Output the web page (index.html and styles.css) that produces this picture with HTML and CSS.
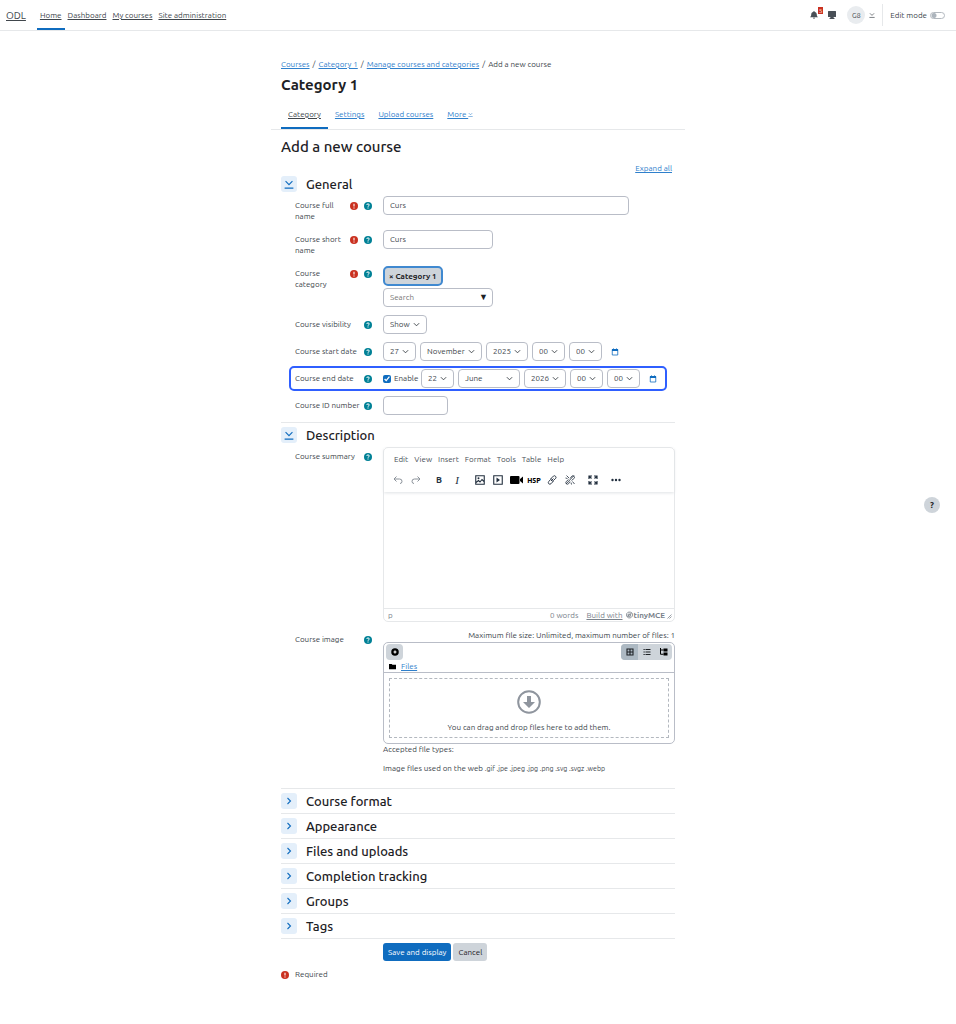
FILE: index.html
```
<!DOCTYPE html>
<html lang="en">
<head>
  <meta charset="UTF-8">
  <meta name="viewport" content="width=device-width, initial-scale=1.0">
  <title>Add a new course</title>
  <link rel="stylesheet" href="styles.css">
</head>
<body>
  <!-- icons used more than once -->
  <svg class="sprite" aria-hidden="true">
    <symbol id="i-req" viewBox="0 0 16 16"><circle cx="8" cy="8" r="8" fill="#ca3120"/><path d="M8 3.5v5.5M8 11v2" stroke="#fff" stroke-width="2.2"/></symbol>
    <symbol id="i-help" viewBox="0 0 16 16"><circle cx="8" cy="8" r="8" fill="#008196"/><path d="M5.5 6c0-3 5-3 5 0 0 1.700-2.500 1.700-2.500 3.500M8 11v2" fill="none" stroke="#fff" stroke-width="2"/></symbol>
    <symbol id="i-down" viewBox="0 0 16 16"><path d="M2.500 3.500L8 9l5.500-5.500M1 14.500h14" fill="none" stroke="currentColor" stroke-width="1.800"/></symbol>
    <symbol id="i-right" viewBox="0 0 16 16"><path d="M5 2l6 6-6 6" fill="none" stroke="currentColor" stroke-width="2.200"/></symbol>
    <symbol id="i-cal" viewBox="0 0 16 16"><path d="M2.500 3h11v11h-11z" fill="none" stroke="currentColor" stroke-width="1.600"/><path d="M2 2h12v4H2zM4 1h2v2H4zM10 1h2v2h-2z" fill="currentColor"/></symbol>
  </svg>

  <header class="navbar">
    <a class="brand" href="#">ODL</a>
    <nav class="main-nav">
      <a class="active" href="#">Home</a>
      <a href="#">Dashboard</a>
      <a href="#">My courses</a>
      <a href="#">Site administration</a>
    </nav>
    <div class="user-nav">
      <button class="icon-btn bell" aria-label="Notifications">
        <svg class="ico-8" viewBox="0 0 16 16"><path d="M8 0c.7 0 1.200.5 1.200 1.300C12 2 13.500 4 13.500 6.500c0 3 1 4.500 2.500 6H0c1.500-1.500 2.500-3 2.500-6C2.500 4 4 2 6.800 1.300 6.800.5 7.300 0 8 0zM6 13.500h4a2 2 0 0 1-4 0z" fill="#495057"/></svg>
        <span class="badge">5</span>
      </button>
      <button class="icon-btn" aria-label="Messages">
        <svg class="ico-8" viewBox="0 0 16 16"><path d="M1 0h14q1 0 1 1v10q0 1-1 1h-4v1l2 1.500V16H3v-1.500L5 13v-1H1q-1 0-1-1V1q0-1 1-1z" fill="#495057"/></svg>
      </button>
      <button class="user-btn"><span class="avatar">G8</span><svg class="ico-6"><use href="#i-down"/></svg></button>
      <label class="edit-mode">Edit mode <input type="checkbox" role="switch"></label>
    </div>
  </header>

  <main class="page">
    <nav class="breadcrumb">
      <a href="#">Courses</a><span>/</span><a href="#">Category 1</a><span>/</span><a href="#">Manage courses and categories</a><span>/</span>Add a new course
    </nav>
    <h1>Category 1</h1>
    <nav class="tabs">
      <a class="active" href="#">Category</a>
      <a href="#">Settings</a>
      <a href="#">Upload courses</a>
      <a href="#">More <svg class="ico-4"><use href="#i-down"/></svg></a>
    </nav>
    <h2>Add a new course</h2>
    <div class="expand"><a href="#">Expand all</a></div>

    <form>
      <section class="section first">
        <div class="section-head"><button type="button" class="toggle" aria-label="General"><svg><use href="#i-down"/></svg></button><h3>General</h3></div>
        <div class="rows">
          <div class="row">
            <div class="label"><label for="fullname">Course full name</label><svg class="ico-8"><use href="#i-req"/></svg><svg class="ico-8"><use href="#i-help"/></svg></div>
            <input id="fullname" class="w-full" type="text" value="Curs">
          </div>
          <div class="row">
            <div class="label"><label for="shortname">Course short name</label><svg class="ico-8"><use href="#i-req"/></svg><svg class="ico-8"><use href="#i-help"/></svg></div>
            <input id="shortname" class="w-mid" type="text" value="Curs">
          </div>
          <div class="row">
            <div class="label"><label for="category">Course category</label><svg class="ico-8"><use href="#i-req"/></svg><svg class="ico-8"><use href="#i-help"/></svg></div>
            <div class="category">
              <button type="button" class="chip">× Category 1</button>
              <div class="search"><input id="category" class="w-mid" type="text" placeholder="Search"><span>▼</span></div>
            </div>
          </div>
          <div class="row">
            <div class="label"><label for="visible">Course visibility</label><svg class="ico-8"><use href="#i-help"/></svg></div>
            <select id="visible" class="s-show"><option>Show</option></select>
          </div>
          <div class="row">
            <div class="label"><label for="startday">Course start date</label><svg class="ico-8"><use href="#i-help"/></svg></div>
            <div class="date">
              <select id="startday"><option>27</option></select>
              <select class="s-month" aria-label="Month"><option>November</option></select>
              <select class="s-year" aria-label="Year"><option>2025</option></select>
              <select aria-label="Hour"><option>00</option></select>
              <select aria-label="Minute"><option>00</option></select>
              <a class="cal" href="#" aria-label="Calendar"><svg class="ico-8"><use href="#i-cal"/></svg></a>
            </div>
          </div>
          <div class="row highlight">
            <div class="label"><label for="endday">Course end date</label><svg class="ico-8"><use href="#i-help"/></svg></div>
            <div class="date">
              <label class="enable"><input type="checkbox" checked> Enable</label>
              <select id="endday"><option>22</option></select>
              <select class="s-month" aria-label="Month"><option>June</option></select>
              <select class="s-year" aria-label="Year"><option>2026</option></select>
              <select aria-label="Hour"><option>00</option></select>
              <select aria-label="Minute"><option>00</option></select>
              <a class="cal" href="#" aria-label="Calendar"><svg class="ico-8"><use href="#i-cal"/></svg></a>
            </div>
          </div>
          <div class="row">
            <div class="label"><label for="idnumber">Course ID number</label><svg class="ico-8"><use href="#i-help"/></svg></div>
            <input id="idnumber" class="w-small" type="text">
          </div>
        </div>
      </section>

      <section class="section">
        <div class="section-head"><button type="button" class="toggle" aria-label="Description"><svg><use href="#i-down"/></svg></button><h3>Description</h3></div>
        <div class="rows">
          <div class="row">
            <div class="label"><label for="summary">Course summary</label><svg class="ico-8"><use href="#i-help"/></svg></div>
            <div class="editor">
              <div class="editor-head">
                <div class="menubar">
                  <button type="button">Edit</button><button type="button">View</button><button type="button">Insert</button><button type="button">Format</button><button type="button">Tools</button><button type="button">Table</button><button type="button">Help</button>
                </div>
                <div class="toolbar">
                  <div class="group dim">
                    <button type="button" aria-label="Undo"><svg viewBox="0 0 20 20"><path d="M7 3L2 8l5 5M2 8h11q5 0 5 4.500T14 17" fill="none" stroke="currentColor" stroke-width="2"/></svg></button>
                    <button type="button" aria-label="Redo"><svg viewBox="0 0 20 20"><path d="M13 3l5 5-5 5M18 8H7q-5 0-5 4.500T6 17" fill="none" stroke="currentColor" stroke-width="2"/></svg></button>
                  </div>
                  <div class="group">
                    <button type="button" class="bold">B</button>
                    <button type="button" class="italic">I</button>
                  </div>
                  <div class="group">
                    <button type="button" aria-label="Image"><svg viewBox="0 0 20 20"><path d="M1.500 1.500h17v17h-17zM2 15l5-4 3 3 4-5 4 4" fill="none" stroke="currentColor" stroke-width="2.200"/><circle cx="7" cy="6.500" r="2" fill="currentColor"/></svg></button>
                    <button type="button" aria-label="Multimedia"><svg viewBox="0 0 20 20"><path d="M1.500 1.500h17v17h-17z" fill="none" stroke="currentColor" stroke-width="2.200"/><path d="M7 5l7 5-7 5z" fill="currentColor"/></svg></button>
                    <button type="button" aria-label="Record video"><svg class="wide" viewBox="0 0 26 20"><path d="M2 2h15q2 0 2 2v12q0 2-2 2H2q-2 0-2-2V4q0-2 2-2zM20 8l6-5v14l-6-5z" fill="#000"/></svg></button>
                    <button type="button" class="h5p">H5P</button>
                    <button type="button" aria-label="Link"><svg viewBox="0 0 20 20"><path d="M8 12l5-5M7 8l6-6q2-1.500 4 .5t.5 4L13 11q-2 2-4 0M13 12l-5 5.500q-2.500 2-4.500 0t0-4.500L7 9q2-2 4 0" fill="none" stroke="currentColor" stroke-width="1.800"/></svg></button>
                    <button type="button" aria-label="Unlink"><svg viewBox="0 0 20 20"><path d="M10 7l4-5q2-1.500 4 .5t.5 4L13 11M10 13l-3 4.500q-2.500 2-4.500 0t0-4.500L7 9M3 1l5 5M1 6l4 1M15 13l4 5M12 15l1 4M18 1L2 18" fill="none" stroke="currentColor" stroke-width="1.600"/></svg></button>
                  </div>
                  <div class="group">
                    <button type="button" aria-label="Fullscreen"><svg viewBox="0 0 20 20"><path d="M2 8V2h6M12 2h6v6M18 12v6h-6M8 18H2v-6M2 2l5 5M18 2l-5 5M18 18l-5-5M2 18l5-5" fill="none" stroke="currentColor" stroke-width="2.400"/></svg></button>
                  </div>
                  <div class="group">
                    <button type="button" aria-label="More"><svg viewBox="0 0 20 20"><circle cx="3" cy="10" r="2.400" fill="currentColor"/><circle cx="10" cy="10" r="2.400" fill="currentColor"/><circle cx="17" cy="10" r="2.400" fill="currentColor"/></svg></button>
                  </div>
                </div>
              </div>
              <textarea id="summary"></textarea>
              <div class="statusbar">
                <span class="path">p</span><span>0 words</span>
                <a href="#"><u>Build with</u> <svg class="ico-8" viewBox="0 0 16 16"><path d="M5 1.500h5l4.500 3v6l-4 4H6L1.500 11V5zM5 6h5v5H5zM3 12L13 3" fill="none" stroke="currentColor" stroke-width="2"/></svg><b>tinyMCE</b></a>
                <svg class="grip" viewBox="0 0 10 10"><path d="M9 1L1 9M9 5L5 9" stroke="currentColor" stroke-width="1.500"/></svg>
              </div>
            </div>
          </div>

          <div class="row">
            <div class="label"><span>Course image</span><svg class="ico-8"><use href="#i-help"/></svg></div>
            <div class="files">
              <div class="limits">Maximum file size: Unlimited, maximum number of files: 1</div>
              <div class="filemanager">
                <div class="fm-bar">
                  <button type="button" class="add" aria-label="Add file"><svg class="ico-8" viewBox="0 0 16 16"><circle cx="8" cy="8" r="7.500" fill="#000"/><path d="M8 5v6M5 8h6" stroke="#fff" stroke-width="2.400"/></svg></button>
                  <div class="views">
                    <button type="button" class="on" aria-label="Icons"><svg class="ico-8" viewBox="0 0 16 16"><path d="M2 2h12v12H2zM8 2v12M2 8h12" fill="none" stroke="#1d2125" stroke-width="2.200"/></svg></button>
                    <button type="button" aria-label="List"><svg class="ico-8" viewBox="0 0 16 16"><path d="M1 3h2.500M5 3h10M1 8h2.500M5 8h10M1 13h2.500M5 13h10" stroke="#1d2125" stroke-width="2"/></svg></button>
                    <button type="button" aria-label="Tree"><svg class="ico-8" viewBox="0 0 16 16"><path d="M7 1h8v6H7zM7 9h8v6H7z" fill="#000"/><path d="M1 0v12.500h6M1 4h6" fill="none" stroke="#000" stroke-width="2"/></svg></button>
                  </div>
                </div>
                <div class="fm-path"><svg viewBox="0 0 16 16"><path d="M0 2h6l2 2h8v10H0z" fill="#000"/></svg><a href="#">Files</a></div>
                <div class="drop">
                  <svg viewBox="0 0 24 24"><circle cx="12" cy="12" r="10.800" fill="none" stroke="#8f959e" stroke-width="2"/><path d="M10 6h4v6h4l-6 6-6-6h4z" fill="#8f959e"/></svg>
                  <span>You can drag and drop files here to add them.</span>
                </div>
              </div>
              <p>Accepted file types:</p>
              <p class="types">Image files used on the web <small>.gif .jpe .jpeg .jpg .png .svg .svgz .webp</small></p>
            </div>
          </div>
        </div>
      </section>

      <section class="section closed"><button type="button" class="toggle" aria-label="Course format"><svg class="ico-8"><use href="#i-right"/></svg></button><h3>Course format</h3></section>
      <section class="section closed"><button type="button" class="toggle" aria-label="Appearance"><svg class="ico-8"><use href="#i-right"/></svg></button><h3>Appearance</h3></section>
      <section class="section closed"><button type="button" class="toggle" aria-label="Files and uploads"><svg class="ico-8"><use href="#i-right"/></svg></button><h3>Files and uploads</h3></section>
      <section class="section closed"><button type="button" class="toggle" aria-label="Completion tracking"><svg class="ico-8"><use href="#i-right"/></svg></button><h3>Completion tracking</h3></section>
      <section class="section closed"><button type="button" class="toggle" aria-label="Groups"><svg class="ico-8"><use href="#i-right"/></svg></button><h3>Groups</h3></section>
      <section class="section closed"><button type="button" class="toggle" aria-label="Tags"><svg class="ico-8"><use href="#i-right"/></svg></button><h3>Tags</h3></section>

      <div class="actions">
        <button type="submit" class="btn primary">Save and display</button>
        <button type="button" class="btn">Cancel</button>
      </div>
      <div class="required"><svg class="ico-8"><use href="#i-req"/></svg>Required</div>
    </form>
  </main>

  <button class="help-btn" aria-label="Help">?</button>
</body>
</html>
```
FILE: styles.css
```
* {
  box-sizing: border-box;
}

body {
  margin: 0;
  background: #fff;
  color: #40464c;
  font-family: Ubuntu, "Noto Sans", sans-serif;
  font-size: 8px;
  line-height: 11px;
}

button, input, select, textarea {
  font: inherit;
  color: inherit;
  margin: 0;
}

button {
  border: 0;
  padding: 0;
  background: none;
  cursor: pointer;
}

h1, h2, h3, p {
  margin: 0;
}

h1, h2, h3 { color: #1d2125; }

a { color: #2f80cc; }
svg { display: block; flex: none; }

.sprite { position: absolute; width: 0; height: 0; }
.ico-8 { width: 8px; height: 8px; }
.ico-6 { width: 6px; height: 6px; }
.ico-4 { width: 5px; height: 5px; display: inline-block; }

/* top bar */
.navbar {
  display: flex;
  height: 31px;
  padding: 0 11px 0 6px;
  border-bottom: 1px solid #e6e8ea;
}

.navbar a { color: #40464c; }

.brand {
  font-size: 10px;
  line-height: 31px;
  margin-right: 11px;
}

.main-nav { display: flex; }

.main-nav a {
  padding: 0 3px;
  line-height: 31px;
}

.main-nav .active {
  border-bottom: 2px solid #0f6cbf;
  height: 30px;
}

.user-nav {
  display: flex;
  align-items: center;
  margin-left: auto;
}

.icon-btn {
  position: relative;
  width: 18px;
  display: flex;
  justify-content: center;
}

.badge {
  position: absolute;
  top: -4px;
  right: 0;
  width: 5px;
  height: 7px;
  background: #ca3120;
  color: #fff;
  font-size: 6px;
  line-height: 7px;
}

.user-btn {
  display: flex;
  align-items: center;
  gap: 4px;
  padding: 0 7px 0 6px;
}

.avatar {
  width: 18px;
  height: 18px;
  border-radius: 50%;
  background: #e9ecef;
  font-size: 7px;
  line-height: 18px;
}

.edit-mode {
  display: flex;
  align-items: center;
  gap: 3px;
  height: 22px;
  padding-left: 7px;
  border-left: 1px solid #e6e8ea;
}

.edit-mode input {
  appearance: none;
  width: 15px;
  height: 7px;
  border: 1px solid #b3b9bf;
  border-radius: 4px;
  background: radial-gradient(circle at 3px 50%, #adb5bd 2px, transparent 3px);
}

/* page heading */
.page {
  max-width: 414px;
  margin: 0 auto;
  padding: 28px 10px 40px;
}

.breadcrumb span { margin: 0 3px; }

h1 {
  font-size: 15px;
  line-height: 20px;
  margin-top: 5px;
}

.tabs {
  display: flex;
  height: 30px;
  margin: 5px -10px 0;
  padding-left: 10px;
  border-bottom: 1px solid #e6e8ea;
}

.tabs a {
  padding: 0 7px;
  line-height: 29px;
}

.tabs .active {
  color: #40464c;
  border-bottom: 2px solid #0f6cbf;
}

h2 {
  font-size: 15px;
  font-weight: 500;
  line-height: 20px;
  margin-top: 7px;
}

.expand {
  text-align: right;
  padding: 6px 3px 0 0;
}

/* form sections */
.section {
  border-top: 1px solid #e6e8ea;
  padding: 4px 0 8px;
}

.first {
  border: 0;
  padding: 2px 0 7px;
}

.section-head, .closed {
  display: flex;
  align-items: center;
  gap: 9px;
}

.closed { padding: 4px 0; }

.toggle {
  display: flex;
  align-items: center;
  justify-content: center;
  width: 16px;
  height: 16px;
  border-radius: 3px;
  background: #e4effa;
  color: #0f6cbf;
}

.section-head .toggle svg { width: 10px; height: 10px; }

h3 {
  font-size: 13px;
  font-weight: 500;
  line-height: 16px;
}

.rows {
  display: flex;
  flex-direction: column;
  gap: 8px;
  padding: 4px 0 0 14px;
}

.row {
  position: relative;
  display: grid;
  grid-template-columns: 77px 1fr;
  column-gap: 11px;
  align-items: start;
}

.label {
  display: flex;
  gap: 2px;
  padding-top: 4px;
}

.label > :first-child { margin-right: auto; }
.label svg { margin-top: 2px; }
.label svg + svg { margin-left: 4px; }

.highlight::before {
  content: "";
  position: absolute;
  inset: -3px 8px -3px -6px;
  border: 2px solid #2f5fff;
  border-radius: 5px;
}

.row input[type="text"], select {
  height: 19px;
  padding: 0 6px;
  border: 1px solid #b9bdc7;
  border-radius: 4px;
  background: #fff;
}

.row .w-full { width: 246px; }
.row .w-mid { width: 110px; }
.row .w-small { width: 65px; }

select {
  position: relative;
  appearance: none;
  width: 33px;
  background: #fff url("data:image/svg+xml,%3Csvg xmlns='http://www.w3.org/2000/svg' viewBox='0 0 8 8'%3E%3Cpath d='M1 2.500l3 3 3-3' fill='none' stroke='%23343a40'/%3E%3C/svg%3E") right 6px center / 7px 7px no-repeat;
}

.row .s-show { width: 44px; }
.row .s-month { width: 62px; }
.row .s-year { width: 42px; }

.date {
  display: flex;
  align-items: center;
  gap: 4px;
}

.cal {
  position: relative;
  color: #0f6cbf;
  margin-left: 5px;
}

.enable {
  position: relative;
  display: flex;
  align-items: center;
  gap: 3px;
  width: 34px;
}

.enable input {
  flex: none;
  width: 8px;
  height: 8px;
  accent-color: #0f6cbf;
}

.category {
  display: flex;
  flex-direction: column;
  align-items: flex-start;
  gap: 2px;
  padding-top: 2px;
}

.chip {
  height: 20px;
  padding: 0 4px;
  border: 2px solid #4089d0;
  border-radius: 5px;
  background: #ced4da;
  color: #1d2125;
  font-weight: bold;
}

.search { position: relative; display: flex; }

.search span {
  position: absolute;
  right: 5px;
  top: 4px;
  font-size: 9px;
  color: #1d2125;
}

/* rich text editor */
.editor {
  border: 1px solid #e6e8ea;
  border-radius: 5px;
  color: #222f3e;
}

.editor-head {
  position: relative;
  height: 44px;
  box-shadow: 0 1px 3px #dfe2e5;
}

.menubar {
  display: flex;
  gap: 6px;
  padding: 6px 10px 0;
  color: #495057;
}

.toolbar {
  display: flex;
  gap: 5px;
  padding: 6px 5px 0;
}

.group { display: flex; }
.dim { color: #8b929a; }

.group button {
  display: flex;
  align-items: center;
  justify-content: center;
  width: 18px;
  height: 18px;
}

.group svg { width: 10px; height: 10px; }
.group .wide { width: 13px; }
.group .bold { font-size: 9px; font-weight: bold; }
.group .italic { font: italic 11px "Liberation Serif", serif; }
.group .h5p { font-size: 7px; font-weight: 900; color: #000; }

.editor textarea {
  display: block;
  width: 100%;
  height: 116px;
  border: 0;
  resize: none;
}

.statusbar {
  display: flex;
  align-items: center;
  gap: 8px;
  height: 13px;
  padding: 0 2px 0 4px;
  border-top: 1px solid #e6e8ea;
  color: #7a828b;
}

.path { margin-right: auto; }

.statusbar a {
  display: flex;
  align-items: center;
  color: inherit;
  text-decoration: none;
  margin-right: -6px;
}

.statusbar a svg { margin: 0 1px 0 3px; width: 7px; }
.grip { width: 5px; height: 5px; align-self: flex-end; margin-bottom: 2px; }

/* file manager */
.limits { text-align: right; line-height: 12px; }

.filemanager {
  border: 1px solid #b9bdc7;
  border-radius: 5px;
}

.fm-bar {
  display: flex;
  justify-content: space-between;
  padding: 1px 2px 0;
}

.add, .views {
  display: flex;
  align-items: center;
  justify-content: center;
  height: 16px;
  border-radius: 4px;
  background: #ced4da;
  overflow: hidden;
}

.add { width: 17px; }

.views button {
  display: flex;
  align-items: center;
  justify-content: center;
  width: 17px;
  height: 16px;
}

.views .on { background: #adb9c3; }

.fm-path {
  display: flex;
  align-items: center;
  gap: 5px;
  height: 13px;
  padding-left: 5px;
  border-bottom: 1px solid #b9bdc7;
}

.fm-path svg { width: 7px; height: 7px; }

.drop {
  display: flex;
  flex-direction: column;
  align-items: center;
  gap: 8px;
  height: 60px;
  margin: 5px;
  padding-top: 11px;
  border: 1px dashed #b3b8bf;
}

.drop svg { width: 24px; height: 24px; }

.types { margin: 8px 0 6px; }
small { font-size: 7px; }

/* footer */
.actions {
  display: flex;
  gap: 2px;
  padding: 4px 0 0 102px;
  border-top: 1px solid #e6e8ea;
}

.btn {
  height: 18px;
  padding: 0 5px;
  border-radius: 3px;
  background: #ced4da;
  color: #1d2125;
}

.primary { background: #0f6cbf; color: #fff; }

.required {
  display: flex;
  align-items: center;
  gap: 6px;
  margin-top: 8px;
}

.help-btn {
  position: fixed;
  right: 16px;
  top: calc(50% - 15px);
  width: 16px;
  height: 16px;
  border-radius: 50%;
  background: #ced4da;
  color: #1d2125;
  font-size: 9px;
  font-weight: bold;
}
```
